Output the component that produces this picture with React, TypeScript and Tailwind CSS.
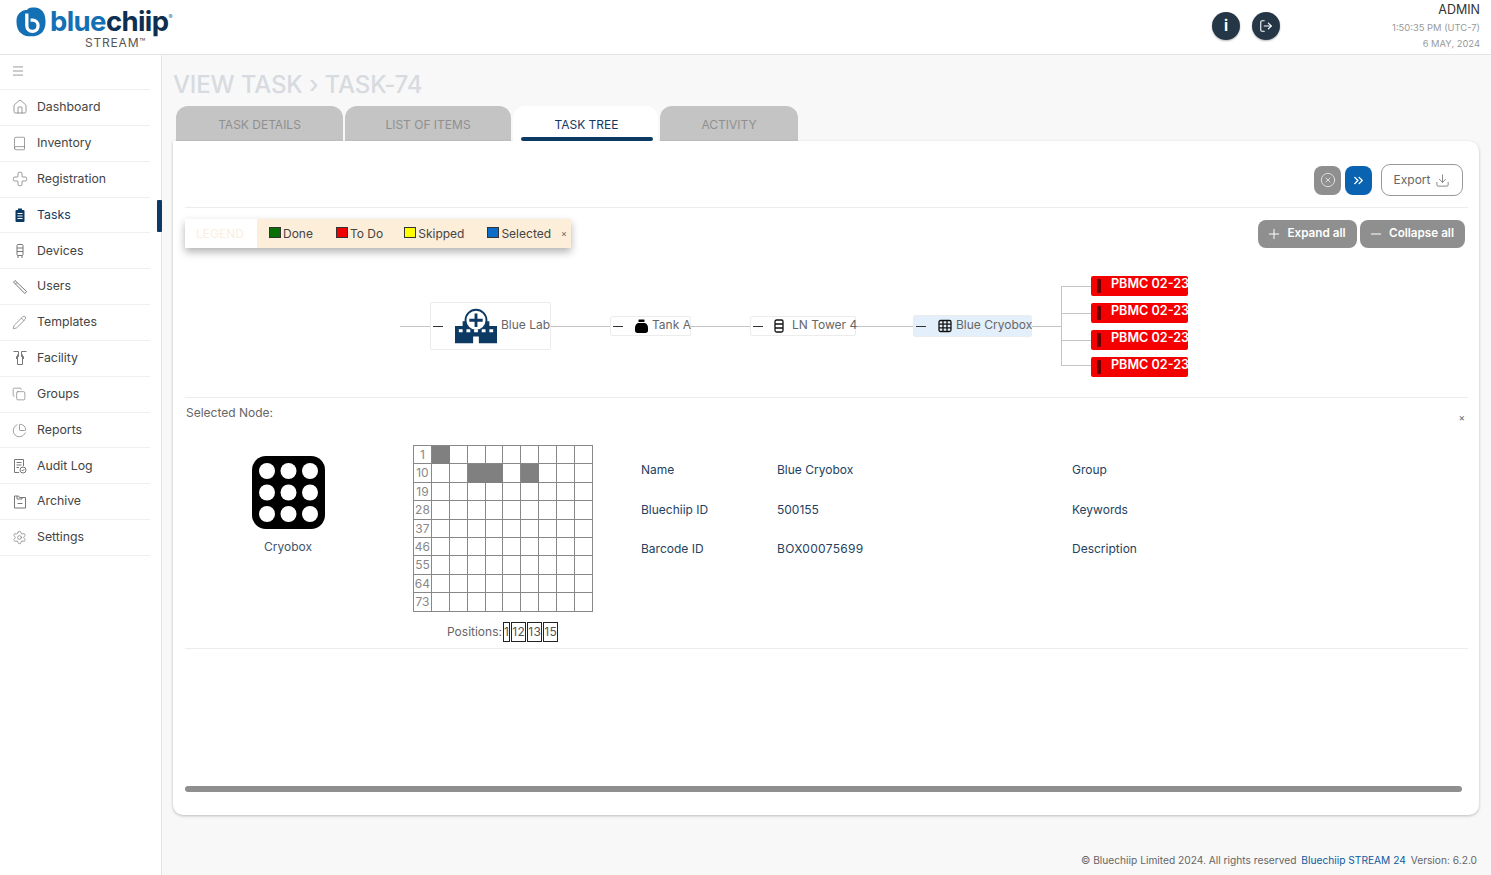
import React from "react";
import { House, Book, Cross, Pencil, Copy, ChartPie, Settings, Menu, Download, Plus, Minus, CircleX, ChevronsRight, LogOut } from "lucide-react";

const S = { fontFamily: '"Inter","Liberation Sans",sans-serif' };

function Tasks() {
  return (
    <svg width="16" height="16" viewBox="0 0 16 16">
      <path d="M6 1.5h4V3h1.5a1 1 0 0 1 1 1v10a1 1 0 0 1-1 1h-7a1 1 0 0 1-1-1V4a1 1 0 0 1 1-1H6z" fill="#0d3a63" />
      <path d="M5.5 6.5h5M5.5 9h5M5.5 11.5h5" stroke="#fff" strokeWidth="1.1" />
    </svg>
  );
}
function Device() {
  return (
    <svg width="16" height="16" viewBox="0 0 16 16" fill="none" stroke="#777" strokeWidth="1">
      <rect x="5" y="1.5" width="6" height="11" rx="1" />
      <path d="M5 5h6M5 8.5h6M6 12.5V15M10 12.5V15" />
    </svg>
  );
}
function UserTool() {
  return (
    <svg width="16" height="16" viewBox="0 0 16 16" fill="none" stroke="#777" strokeWidth="1">
      <path d="M1.5 3 3 1.5 14.5 12.5 12.8 14.5Z" />
      <path d="M3.5 5 5 3.5" />
    </svg>
  );
}
function Facility() {
  return (
    <svg width="16" height="16" viewBox="0 0 16 16" fill="none" stroke="#777" strokeWidth="1">
      <path d="M1.5 1.500h5v5h-2v2.500M14.500 1.500h-5v5h2v2.500M5.500 4.500v10h5v-10" />
    </svg>
  );
}
function Audit() {
  return (
    <svg width="16" height="16" viewBox="0 0 16 16" fill="none" stroke="#777" strokeWidth="1">
      <path d="M7 14.500H2.500v-13h9V8" />
      <path d="M4.500 4.500h5M4.500 7h5M4.500 9.500h2.500" />
      <circle cx="11" cy="12" r="3" />
      <path d="m9.700 12 1 1 1.600-1.800" />
    </svg>
  );
}
function ArchiveIc() {
  return (
    <svg width="16" height="16" viewBox="0 0 16 16" fill="none" stroke="#777" strokeWidth="1">
      <path d="M2.500 2h4l1 1.500h6V14h-11Z" />
      <path d="M5 2v3h5V3.500M5.500 9.500h5" />
    </svg>
  );
}

const nav: [string, React.ReactNode][] = [
  ["Dashboard", <House size={16} strokeWidth={1} color="#666" />],
  ["Inventory", <Book size={15} strokeWidth={1} color="#666" />],
  ["Registration", <Cross size={16} strokeWidth={1} color="#666" />],
  ["Tasks", <Tasks />],
  ["Devices", <Device />],
  ["Users", <UserTool />],
  ["Templates", <Pencil size={15} strokeWidth={1} color="#666" />],
  ["Facility", <Facility />],
  ["Groups", <Copy size={14} strokeWidth={1} color="#666" />],
  ["Reports", <ChartPie size={15} strokeWidth={1} color="#666" />],
  ["Audit Log", <Audit />],
  ["Archive", <ArchiveIc />],
  ["Settings", <Settings size={15} strokeWidth={1} color="#666" />],
];

function Logo() {
  return (
    <div className="flex flex-col w-[165px] ml-[16px] mt-[6px]">
      <div className="flex items-center h-[31px]">
        <svg width="31" height="30" viewBox="0 0 32 32" className="mr-[3px] shrink-0">
          <path d="M5 5C8 2 12 4 12 2c3-2 9-2 13 0 5 3 6 9 6 14 0 7-3 12-8 14-6 2-14 2-18-2C0 24 0 18 0 14 0 10 2 7 5 5Z" fill="#1470b4" />
          <path d="M11 7v13a6 6 0 1 0 6-6h-2" fill="none" stroke="#fff" strokeWidth="3.5" />
        </svg>
        <span className="text-[27.5px] font-bold leading-[31px] tracking-[-0.6px] text-[#1470b4] whitespace-nowrap">blue<span className="text-[#0d2f52]">chiip</span></span>
        <span className="text-[6px] text-[#1470b4] self-start mt-[6px]">®</span>
      </div>
      <div className="text-[12px] leading-[12px] text-[#555] tracking-[0.8px] ml-[69px] whitespace-nowrap">STREAM<span className="text-[10px] align-top leading-[10px]">™</span></div>
    </div>
  );
}

function Tab({ label, active, w }: { label: string; active?: boolean; w: string }) {
  return active ? (
    <div className={`${w} h-[35px] bg-white rounded-t-[12px] flex flex-col items-center relative pl-[2px]`}>
      <span className="text-[12px] mt-[11px] leading-[15px] text-[#12395e]">{label}</span>
      <span className="absolute bottom-0 left-[8px] right-[5px] h-[4px] rounded-full bg-[#0d3a63]" />
    </div>
  ) : (
    <div className={`${w} h-[35px] bg-[#c4c4c4] rounded-t-[12px] flex justify-center`}>
      <span className="text-[12px] mt-[11px] leading-[15px] text-[#8f8f8f]">{label}</span>
    </div>
  );
}

function Swatch({ color, label, cls }: { color: string; label: string; cls: string }) {
  return (
    <span className={`flex items-center ${cls}`}>
      <span className="w-[12px] h-[11px] border border-[#333] mr-[2px] mb-[2px]" style={{ background: color }} />
      {label}
    </span>
  );
}

function TreeNode({ cls, children }: { cls: string; children: React.ReactNode }) {
  return (
    <div className={`absolute flex items-center rounded-[2px] border border-[#ececec] text-[12px] text-[#666] whitespace-nowrap ${cls}`}>
      <span className="w-[10px] h-[1px] bg-[#333] ml-[2px] shrink-0" />
      {children}
    </div>
  );
}

function Hospital() {
  return (
    <svg width="42" height="36" viewBox="0 0 44 36">
      <path d="M0 36V18h8v-5h7v5h14v-5h7v5h8v18H25v-7h-6v7Z" fill="#0d3a63" />
      <circle cx="22" cy="12" r="11" fill="#fff" stroke="#0d3a63" strokeWidth="2" />
      <path d="M22 5v14M15 12h14" stroke="#0d3a63" strokeWidth="3" />
      <path d="M4 23h4M12 23h4M20 23h4M28 23h4M36 23h4" stroke="#fff" strokeWidth="3" />
    </svg>
  );
}

const gridRows = [1, 10, 19, 28, 37, 46, 55, 64, 73];
const filled = new Set(["0-1", "1-3", "1-4", "1-6"]);

export default function App() {
  return (
    <div style={S} className="w-[1491px] h-[875px] overflow-hidden bg-[#f8f8f8] flex flex-col text-[#3a3a3a]">
      <header className="h-[55px] shrink-0 bg-white border-b border-[#e4e4e4] flex">
        <Logo />
        <div className="ml-auto flex items-center gap-[12px] mr-[100px] mb-[2px]">
          <span className="w-[28px] h-[28px] rounded-full bg-[#253746] text-white flex items-center justify-center shadow-[0_1px_2px_rgba(0,0,0,0.3)]"><span className="text-[15px] font-bold">i</span></span>
          <span className="w-[28px] h-[28px] rounded-full bg-[#253746] text-white flex items-center justify-center shadow-[0_1px_2px_rgba(0,0,0,0.3)]"><LogOut size={14} strokeWidth={1.9} /></span>
        </div>
        <div className="w-[100px] mr-[11px] text-right flex flex-col items-end pt-[2px]">
          <span className="text-[12.5px] leading-[16px] text-[#333]">ADMIN</span>
          <span className="text-[9.4px] leading-[13px] mt-[3px] text-[#999] whitespace-nowrap">1:50:35 PM (UTC-7)</span>
          <span className="text-[9.4px] leading-[13px] mt-[3px] text-[#999] whitespace-nowrap">6 MAY, 2024</span>
        </div>
      </header>
      <div className="flex flex-1 min-h-0">
        <aside className="w-[162px] shrink-0 bg-white border-r border-[#e4e4e4] relative">
          <div className="h-[35px] flex items-center pl-[11px] pb-[2px] border-b border-[#efefef] w-[150px]"><Menu size={14} strokeWidth={1} color="#555" /></div>
          {nav.map(([n, ic]) => (
            <div key={n} className={`h-[35.85px] w-[150px] border-b border-[#efefef] flex items-center relative text-[12.3px] ${n === "Tasks" ? "text-[#0d3a63]" : "text-[#444]"}`}>
              <span className="w-[37px] pl-[12px] flex">{ic}</span>
              {n}
              {n === "Tasks" && <span className="absolute left-[157px] top-[2px] w-[5px] h-[32px] rounded-[1px] bg-[#0d3a63]" />}
            </div>
          ))}
        </aside>
        <main className="flex-1 min-w-0 pl-[11px] pr-[11px] flex flex-col">
          <h1 className="text-[24px] leading-[30px] mt-[15px] text-[#d7dbe0] font-medium tracking-[-0.15px] whitespace-nowrap">VIEW TASK › TASK-74</h1>
          <div className="flex ml-[3px] mt-[6px] gap-[2px]">
            <Tab label="TASK DETAILS" w="w-[167px]" />
            <Tab label="LIST OF ITEMS" w="w-[166px]" />
            <Tab label="TASK TREE" active w="w-[145px]" />
            <Tab label="ACTIVITY" w="w-[138px]" />
          </div>
          <section className="w-[1306px] h-[674px] bg-white rounded-b-[10px] rounded-tr-[10px] shadow-[0_1px_3px_rgba(0,0,0,0.25)] px-[12px] flex flex-col">
            <div className="flex justify-end items-center gap-[4px] mt-[23px] h-[32px] pr-[4px]">
              <span className="w-[27px] h-[29px] rounded-[8px] bg-[#8f8f8f] flex items-center justify-center"><CircleX size={16} color="#e8e8e8" strokeWidth={1.3} /></span>
              <span className="w-[27px] h-[29px] rounded-[8px] bg-[#0a63b0] flex items-center justify-center"><ChevronsRight size={15} color="#fff" strokeWidth={2.2} /></span>
              <span className="w-[82px] h-[32px] ml-[5px] rounded-[9px] border border-[#999] flex items-center justify-center gap-[5px] text-[12px] text-[#666]">Export <Download size={15} strokeWidth={1.2} /></span>
            </div>
            <div className="h-[1px] bg-[#ececec] mt-[11px] w-[1283px]" />
            <div className="flex items-start justify-between mt-[11px] h-[30px]">
              <div className="w-[386px] h-[29px] flex shadow-[0_4px_8px_rgba(0,0,0,0.3)] text-[12px] text-[#444]">
                <span className="w-[72px] bg-white flex items-center pl-[11px] text-[#fbeede]">LEGEND</span>
                <span className="flex-1 bg-[#fdeeda] flex items-center relative">
                  <Swatch color="#067006" label="Done" cls="ml-[12px]" />
                  <Swatch color="#f00000" label="To Do" cls="ml-[23px]" />
                  <Swatch color="#ffff00" label="Skipped" cls="ml-[21px]" />
                  <Swatch color="#0a6cc8" label="Selected" cls="ml-[23px]" />
                  <span className="absolute right-[4px] text-[9px] text-[#666]">×</span>
                </span>
              </div>
              <div className="flex gap-[3px] mr-[2px] mt-[1px]">
                <span className="w-[99px] h-[28px] rounded-[8px] bg-[#8f8f8f] text-white text-[11.7px] font-semibold flex items-center justify-center gap-[5px] pr-[3px]"><Plus size={16} strokeWidth={1.5} />Expand all</span>
                <span className="w-[105px] h-[28px] rounded-[8px] bg-[#8f8f8f] text-white text-[11.7px] font-semibold flex items-center justify-center gap-[5px] pr-[3px]"><Minus size={16} strokeWidth={1.5} />Collapse all</span>
              </div>
            </div>
            {/* tree: free diagram canvas, x/y relative to its own box */}
            <div className="relative h-[148px] -mx-[12px]">
              <span className="absolute left-[227px] top-[77px] w-[661px] h-[1px] bg-[#c4c4c4]" />
              <span className="absolute left-[888px] top-[37px] w-[1px] h-[79px] bg-[#c4c4c4]" />
              {[37, 64, 91, 116].map((t) => (
                <span key={t} className="absolute left-[888px] w-[30px] h-[1px] bg-[#c4c4c4]" style={{ top: t }} />
              ))}
              <TreeNode cls="left-[257px] top-[53px] w-[121px] h-[48px] bg-white">
                <span className="ml-[12px] mr-[4px] flex"><Hospital /></span><span className="mb-[3px]">Blue Lab</span>
              </TreeNode>
              <TreeNode cls="left-[437px] top-[67px] w-[81px] h-[20px] bg-white">
                <svg className="ml-[12px] mr-[4px] shrink-0" width="13" height="14" viewBox="0 0 13 14"><rect x="3.500" y="0.500" width="6" height="2.500" rx="0.500" fill="#000" /><path d="M3 4h7c2 1 3 2.500 3 5v2.500c0 1.500-1 2.500-2.500 2.500h-8C1 14 0 13 0 11.500V9c0-2.500 1-4 3-5Z" fill="#000" /></svg><span className="mb-[2px]">Tank A</span>
              </TreeNode>
              <TreeNode cls="left-[577px] top-[67px] w-[106px] h-[20px] bg-white">
                <svg className="ml-[10px] mr-[7px] shrink-0" width="12" height="14" viewBox="0 0 12 14" fill="none" stroke="#111" strokeWidth="1.3"><rect x="2" y="1" width="8" height="12" rx="1.500" /><path d="M2 5h8M2 9h8" /></svg><span className="mb-[2px]">LN Tower 4</span>
              </TreeNode>
              <TreeNode cls="left-[740px] top-[66px] w-[119px] h-[22px] bg-[#e3f0fb]">
                <svg className="ml-[12px] mr-[4px] shrink-0" width="14" height="14" viewBox="0 0 14 14" fill="none" stroke="#111" strokeWidth="1.3"><rect x="1" y="1.500" width="12" height="11" rx="1.500" /><path d="M5 1.500v11M9 1.500v11M1 5.200h12M1 8.800h12" /></svg><span className="mb-[2px]">Blue Cryobox</span>
              </TreeNode>
              {[27, 54, 81, 108].map((t) => (
                <div key={t} className="absolute left-[918px] w-[97px] h-[20px] rounded-[2px] bg-[#f40000] text-white text-[12.6px] font-semibold flex items-center overflow-hidden whitespace-nowrap" style={{ top: t }}>
                  <span className="ml-[6px] w-[4px] h-[14px] bg-[#600] rounded-[1px] shrink-0" />
                  <span className="ml-[10px] mb-[4px]">PBMC 02-23</span>
                </div>
              ))}
            </div>
            <div className="h-[1px] bg-[#ececec] w-[1283px]" />
            <div className="flex justify-between mt-[7px] text-[12px] text-[#666]">
              <span className="leading-[15px] ml-[1px]">Selected Node:</span>
              <span className="text-[10px] mt-[5px] mr-[2px] leading-[15px]">×</span>
            </div>
            <div className="flex mt-[20px] h-[203px]">
              <div className="w-[228px] flex flex-col items-center pt-[11px]">
                <svg className="ml-[-22px]" width="73" height="73" viewBox="0 0 73 73">
                  <rect width="73" height="73" rx="14" fill="#000" />
                  {[15, 36.5, 58].map((y) => [15, 36.5, 58].map((x) => <circle key={`${x}-${y}`} cx={x} cy={y} r="8" fill="#fff" />))}
                </svg>
                <span className="ml-[-22px] mt-[9px] text-[12px] text-[#3f5468]">Cryobox</span>
              </div>
              <div className="w-[228px] flex flex-col">
                <div className="grid grid-cols-[repeat(10,17.9px)] w-[180px] border-t border-l border-[#888]">
                  {gridRows.map((r, i) =>
                    Array.from({ length: 10 }).map((_, c) => (
                      <div key={c} className={`h-[18.4px] border-r border-b text-[12px] leading-[17px] text-center text-[#888] ${filled.has(`${i}-${c}`) ? "bg-[#808080] border-[#808080]" : "border-[#888]"}`}>
                        {c === 0 ? r : ""}
                      </div>
                    ))
                  )}
                </div>
                <div className="flex items-center mt-[10px] ml-[34px] text-[12px] text-[#666]">
                  Positions:
                  <span className="flex ml-[1px] text-[#555] tracking-[0.4px]">
                    {["1", "12", "13", "15"].map((p) => <span key={p} className="border border-[#222] h-[20px] leading-[18px] mr-[1px]">{p}</span>)}
                  </span>
                </div>
              </div>
              <div className="text-[12px] text-[#23425f] grid grid-cols-[136px_295px_auto] auto-rows-[39.5px] content-start mt-[16px]">
                <span>Name</span><span>Blue Cryobox</span><span>Group</span>
                <span>Bluechiip ID</span><span>500155</span><span>Keywords</span>
                <span>Barcode ID</span><span className="tracking-[0.3px]">BOX00075699</span><span>Description</span>
              </div>
            </div>
            <div className="h-[1px] bg-[#ececec] w-[1283px]" />
            <div className="h-[6px] w-[1277px] rounded-full bg-[#8f8f8f] mt-[137px]" />
          </section>
          <footer className="mt-[38px] text-right pr-[3px] text-[10.2px] leading-[14px] text-[#666] whitespace-nowrap">
            © Bluechiip Limited 2024. All rights reserved <span className="text-[#0d5a9e] ml-[2px]">Bluechiip STREAM 24</span> <span className="ml-[2px]">Version: 6.2.0</span>
          </footer>
        </main>
      </div>
    </div>
  );
}
